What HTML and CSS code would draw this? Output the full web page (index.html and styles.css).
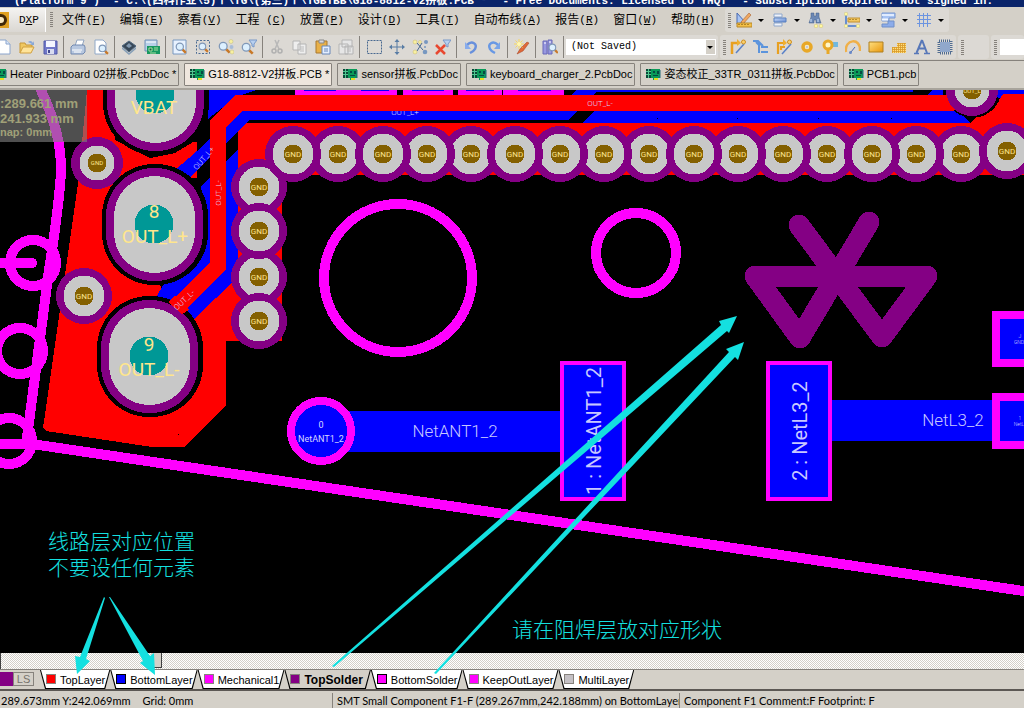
FILE: index.html
```
<!DOCTYPE html>
<html lang="zh-CN">
<head>
<meta charset="utf-8">
<title>DXP - G18-8812-V2拼板.PCB</title>
<link rel="stylesheet" href="styles.css">
</head>
<body>
<svg class="defs" aria-hidden="true">
  <defs>
    <linearGradient id="gb" x1="0" y1="0" x2="1" y2="1"><stop offset="0" stop-color="#c8dcfa"/><stop offset="1" stop-color="#6488d0"/></linearGradient>
    <linearGradient id="gy" x1="0" y1="0" x2="1" y2="1"><stop offset="0" stop-color="#ffe080"/><stop offset="1" stop-color="#e8960c"/></linearGradient>
    <symbol id="i-lens" viewBox="0 0 10 10"><path d="M6 6l3 3" stroke="#c87828" stroke-width="2"/><circle cx="4" cy="4" r="3" fill="#dcf0ff" stroke="#8098b8"/></symbol>
    <symbol id="i-board" viewBox="0 0 16 14"><path d="M1 2h14v9h-3v2H8v-2H1z" fill="#0a9a58"/><path d="M1 2h5v9H1z" fill="#0a4838"/><path d="M1 4.500h5M1 7.500h5M3.500 2v9" stroke="#50c890"/><path d="M8 4h2v2H8zM12 4h2v3h-2zM8 8h5v1H8z" fill="#064a40"/><path d="M9 11h4v2H9z" fill="#e8e020"/><path d="M15 3v8" stroke="#206878"/></symbol>
    <symbol id="i-new" viewBox="0 0 16 16"><path d="M3 1h7l4 4v10H3z" fill="#fff" stroke="#8aa4cc"/><path d="M10 1v4h4" fill="#dbe8fa" stroke="#8aa4cc"/></symbol>
    <symbol id="i-open" viewBox="0 0 16 16"><path d="M1 14V4h5l1 2h6v3" fill="#f0c860" stroke="#c89838"/><path d="M1 14l3-6h11l-3 6z" fill="#ffe49a" stroke="#d0a040"/><path d="M9 3c2-2 4-1 5 1l1-2v4h-4l2-1" fill="#88a8d8"/></symbol>
    <symbol id="i-save" viewBox="0 0 16 16"><path d="M2 2h13v13H2z" fill="#7078c8" stroke="#5058a8"/><path d="M4 2h9v6H4z" fill="#f4f6ff"/><path d="M5 10h7v5H5z" fill="#d8dcf0"/><path d="M6 11h2v3H6z" fill="#404890"/></symbol>
    <symbol id="i-print" viewBox="0 0 16 16"><path d="M5 7l2-6h7l-2 6z" fill="#fff" stroke="#90a4c0"/><path d="M1 8l2-2h11l1 2v5l-2 2H1z" fill="#b8c8e0" stroke="#7088b0"/><path d="M2 11h10M4 13h7" stroke="#fff"/></symbol>
    <symbol id="i-preview" viewBox="0 0 16 16"><path d="M2 1h8l3 3v11H2z" fill="#fff" stroke="#90a8c8"/><use href="#i-lens" x="5" y="5" width="11" height="11"/></symbol>
    <symbol id="i-chip" viewBox="0 0 16 16"><path d="M1 8l7 6 7-6v2l-7 6-7-6z" fill="#88a0b8"/><path d="M1 7l7-5 7 5-7 6z" fill="#384858" stroke="#506880"/><path d="M5 7l3-3 3 3-3 2z" fill="#8098b0"/></symbol>
    <symbol id="i-pcb" viewBox="0 0 16 16"><path d="M1 1h12v11H1z" fill="#b8d0e8" stroke="#7090b8"/><path d="M2 3h10" stroke="#fff"/><path d="M3 7h13v8H3z" fill="#189860"/><path d="M5 9h3v3H5zM10 9h4M10 11h4M6 14h6" stroke="#a8e0a0" fill="#106040"/></symbol>
    <symbol id="i-zdoc" viewBox="0 0 16 16"><path d="M1 1h13v14H1z" fill="#e8f2ff" stroke="#7898c0"/><use href="#i-lens" x="3" y="3" width="12" height="12"/></symbol>
    <symbol id="i-zarea" viewBox="0 0 16 16"><path d="M1.500 1.500h13v13h-13z" fill="none" stroke="#4c6c94" stroke-dasharray="2 1.500"/><use href="#i-lens" x="3" y="3" width="11" height="11"/></symbol>
    <symbol id="i-zsel" viewBox="0 0 16 16"><use href="#i-lens" x="0" y="2" width="13" height="13"/><g fill="#f8f0a0" stroke="#b8b070" stroke-width=".4"><circle cx="13" cy="2.500" r="2"/><circle cx="14" cy="13" r="2"/></g><circle cx="13.500" cy="8" r="2" fill="#a8bcd8"/></symbol>
    <symbol id="i-zfil" viewBox="0 0 16 16"><use href="#i-lens" x="0" y="3" width="13" height="13"/><path d="M8 1h8l-3 4v3l-2-1V5z" fill="#b8d0f0" stroke="#7898c8"/></symbol>
    <symbol id="i-cut" viewBox="0 0 16 16"><path d="M6 1l4 9M10 1L6 10" stroke="#b8b8b8" stroke-width="1.500"/><g fill="none" stroke="#b0b0b0" stroke-width="1.500"><circle cx="5" cy="12" r="2"/><circle cx="11" cy="12" r="2"/></g></symbol>
    <symbol id="i-copy" viewBox="0 0 16 16"><path d="M1 2h7v9H1zM6 5h8v10H6z" fill="#eee" stroke="#b4b4b4"/><path d="M8 8h4M8 10h4M8 12h4" stroke="#bbb"/></symbol>
    <symbol id="i-paste" viewBox="0 0 16 16"><path d="M1 2h11v12H1z" fill="#e8b048" stroke="#a87830"/><path d="M4 1h5v3H4z" fill="#d8d8e0" stroke="#888"/><path d="M7 7h8v8H7z" fill="#e4eeff" stroke="#6888b8"/><path d="M9 10h4M9 12h4" stroke="#6888b8"/></symbol>
    <symbol id="i-pastes" viewBox="0 0 16 16"><path d="M4 1h10v7H4zM1 5h9v10H1zM7 7h8v8H7z" fill="#e6e6e6" stroke="#b4b4b4"/><path d="M9 10h4M9 12h4" stroke="#bbb"/></symbol>
    <symbol id="i-marq" viewBox="0 0 16 16"><path d="M1.500 1.500h14v13h-14z" fill="none" stroke="#486890" stroke-dasharray="2 1"/></symbol>
    <symbol id="i-move" viewBox="0 0 16 16"><path d="M8 2v12M2 8h12" stroke="#587ca4"/><path d="M8 0l2.500 3h-5zM8 16l2.500-3h-5zM0 8l3-2.500v5zM16 8l-3-2.500v5z" fill="#587ca4"/></symbol>
    <symbol id="i-desel" viewBox="0 0 16 16"><path d="M5 4l6 7M5 12l5-8" stroke="#486890"/><g fill="#f8f0a0" stroke="#c8b870" stroke-width=".5"><circle cx="3" cy="3" r="2"/><circle cx="8" cy="3" r="1.500"/><circle cx="3" cy="13" r="2"/></g><g fill="#7898c0"><circle cx="14" cy="3" r="2"/><circle cx="13" cy="13" r="2.300"/><circle cx="13" cy="8" r="1"/></g></symbol>
    <symbol id="i-clear" viewBox="0 0 16 16"><path d="M8 1h8l-3 4v3l-2-1V5z" fill="#b8d0f0" stroke="#7898c8"/><path d="M1 6l9 9M10 6l-9 9" stroke="#e84830" stroke-width="2.500"/></symbol>
    <symbol id="i-undo" viewBox="0 0 16 16"><path d="M4 6c5-5 11-1 8 4-1 2-3 3-5 4" fill="none" stroke="#6890dc" stroke-width="2.500"/><path d="M2 3v7h6z" fill="#88acec"/></symbol>
    <symbol id="i-redo" viewBox="0 0 16 16"><path d="M12 6C7 1 1 5 4 10c1 2 3 3 5 4" fill="none" stroke="#6898e4" stroke-width="2.500"/><path d="M14 3v7H8z" fill="#78a4e8"/></symbol>
    <symbol id="i-wand" viewBox="0 0 16 16"><path d="M3 15l3-5 7-7 2 1-6 8z" fill="#e06838" stroke="#a04020" stroke-width=".5"/><path d="M5 0v10M0 5h10M1.500 1.500l7 7M8.500 1.500l-7 7" stroke="#f8d860"/><circle cx="5" cy="5" r="2" fill="#fff8b0"/></symbol>
    <symbol id="i-brow" viewBox="0 0 16 16"><path d="M1 2h4v13H1zM6 1h4v14H6z" fill="#9898e0" stroke="#6868b8"/><path d="M2 4h2M7 3h2" stroke="#fff"/><use href="#i-lens" x="6" y="4" width="11" height="11"/></symbol>
    <symbol id="i-util" viewBox="0 0 16 16"><path d="M1 1v11l8-2z" fill="#a8c4f4" stroke="#4868b0"/><path d="M5 10l8-9 2 2-8 9z" fill="#f0a860" stroke="#a86030" stroke-width=".6"/><path d="M1 11h15v4H1z" fill="#f4c048" stroke="#b88828"/><path d="M3 12v1M6 12v1M9 12v1M12 12v1" stroke="#704800"/></symbol>
    <symbol id="i-align" viewBox="0 0 16 16"><path d="M2 2h8v3H2zM2 11h8v3H2z" fill="#eef2fa" stroke="#90a8cc"/><path d="M2 6h12v4H2z" fill="url(#gb)" stroke="#5880c0"/></symbol>
    <symbol id="i-find" viewBox="0 0 16 16"><path d="M3 1h3v3h2V1h3v4l2 6H8V8H6v3H1l2-6z" fill="#6c88b4" stroke="#405c88" stroke-width=".5"/><path d="M3 7v3M10 7v3" stroke="#d0e4ff"/><g fill="#fff8a0" stroke="#d0c070" stroke-width=".5"><circle cx="8" cy="14" r="1.800"/><circle cx="13" cy="14" r="1.800"/></g></symbol>
    <symbol id="i-dim" viewBox="0 0 16 16"><path d="M2 3v11h12" fill="none" stroke="#6890d0" stroke-width="2"/><path d="M4 6h12v4H4z" fill="#f4c860" stroke="#c09030"/><path d="M6 7v1M9 7v1M12 7v1" stroke="#785000"/><g fill="#fff8a0" stroke="#c8c080" stroke-width=".5"><circle cx="2" cy="2" r="1.800"/><circle cx="2" cy="14" r="1.800"/><circle cx="14" cy="14" r="1.800"/></g></symbol>
    <symbol id="i-room" viewBox="0 0 16 16"><path d="M2 1h13v5H9v3H2z" fill="#a8c4f4" stroke="#7898d0"/><path d="M2 2h12v2H2z" fill="#e0ecff"/><path d="M2 12h6V9h6v6H2z" fill="#8cacea" stroke="#7090c8"/><path d="M2 7.500h6" stroke="#f4f8ff" stroke-width="2"/></symbol>
    <symbol id="i-grid" viewBox="0 0 16 16"><path d="M3.500 1v14M7.500 1v14M11.500 1v14M1 3.500h14M1 7.500h14M1 11.500h14" stroke="#6c94e0"/></symbol>
    <symbol id="i-rt" viewBox="0 0 16 16"><path d="M2 15V4h6" fill="none" stroke="#e8a020" stroke-width="2.500"/><path d="M7 0l4 4-4 3z" fill="#f0b030"/><path d="M6 14l8-9" stroke="#5880c8" stroke-width="1.500"/><circle cx="13.500" cy="3" r="2" fill="#f8d070" stroke="#d09020"/></symbol>
    <symbol id="i-rt2" viewBox="0 0 16 16"><path d="M2 15V4h6M5 11V8h4" fill="none" stroke="#e8a020" stroke-width="2.200"/><path d="M7 0l4 4-4 3z" fill="#f0b030"/><path d="M6 15l9-10" stroke="#5880c8" stroke-width="1.500"/><circle cx="13.500" cy="3" r="2" fill="#f8d070" stroke="#d09020"/></symbol>
    <symbol id="i-multi" viewBox="0 0 16 16"><path d="M0 2h5l5 5M6 3v11M8 8h7M8 13h7M3 3l4 4" fill="none" stroke="#5c94dc" stroke-width="2"/></symbol>
    <symbol id="i-pad" viewBox="0 0 16 16"><circle cx="8" cy="8" r="4" fill="#fff6c8" stroke="#e8a828" stroke-width="3.500"/><circle cx="8" cy="8" r="1.500" fill="#c8c8d8"/></symbol>
    <symbol id="i-via" viewBox="0 0 16 16"><path d="M9 3h7v5H9z" fill="#70b8e0"/><path d="M6 9v6" stroke="#e8a828" stroke-width="3"/><circle cx="6" cy="6" r="4" fill="#fff6c8" stroke="#e8a828" stroke-width="3"/></symbol>
    <symbol id="i-arc" viewBox="0 0 16 16"><path d="M1 13C-1 0 16-2 15 12" fill="none" stroke="#f0b048" stroke-width="2.500"/><path d="M6 13l4-5" stroke="#486cb8"/><circle cx="5.500" cy="13.500" r="1.500" fill="#6888c8"/></symbol>
    <symbol id="i-fill" viewBox="0 0 16 16"><path d="M1 3h14v10H1z" fill="url(#gy)" stroke="#b08020"/></symbol>
    <symbol id="i-poly" viewBox="0 0 16 16"><path d="M1 14V8h5V4h9v10z" fill="#ffe080"/><path d="M1.500 8v6M3.500 8v6M5.500 8v6M7.500 4v10M9.500 4v10M11.500 4v10M13.500 4v10M6 4.500h9M6 6.500h9M1 8.500h14M1 10.500h14M1 12.500h14" stroke="#d89828" stroke-width=".8"/></symbol>
    <symbol id="i-text" viewBox="0 0 16 16"><path d="M8 1L2.500 14M8 1l5 13M4.500 9.500h7" fill="none" stroke="#5878b8" stroke-width="2"/><path d="M0 14.500h5M10 14.500h6" stroke="#5878b8" stroke-width="1.500"/></symbol>
    <symbol id="i-comp" viewBox="0 0 16 16"><path d="M2 2h12v12H2z" fill="none" stroke="#506c90" stroke-width="3" stroke-dasharray="1 1"/><path d="M3 3h10v10H3z" fill="#90a8cc"/></symbol>
    <symbol id="big" viewBox="0 0 106 121" overflow="visible">
      <rect width="106" height="121" rx="52" fill="#000"/>
      <rect x="4" y="4" width="97" height="113" rx="48" fill="#840084"/>
      <rect x="12" y="12" width="81" height="97" rx="40" fill="#c8c8c8"/>
      <circle cx="52" cy="60" r="19.500" fill="#009896"/>
    </symbol>
    <g id="via"><circle r="28" fill="#840084"/><circle r="20.500" fill="#c8c8c8"/><circle r="9.500" fill="#846000"/><text class="gnd" y="3">GND</text></g>
    <g id="via-s"><circle r="26" fill="#840084"/><circle r="17.500" fill="#c8c8c8"/><circle r="9.500" fill="#846000"/></g>
  </defs>
</svg>

<div class="app">
  <header class="title"><span>(Platform 9 )&nbsp; - C:\(四科作业\5)个\TG\(第三)个\TGBTBB\G18-8812-V2拼板.PCB *</span><span>- Free Documents. Licensed to YHQT</span><span>- Subscription expired. Not signed in.</span></header>

  <div class="row menurow">
    <button class="dxp"><svg class="ic" viewBox="0 0 16 16"><path d="M0 0h16v16H0z" fill="#e0a020"/><circle cx="8" cy="8" r="6" fill="#402808"/><circle cx="8" cy="8" r="3" fill="#f8e8c0"/></svg><span>D<u>X</u>P</span></button>
    <i class="grip"></i>
    <nav class="menus">
      <button>文件<span>(<u>F</u>)</span></button><button>编辑<span>(<u>E</u>)</span></button><button>察看<span>(<u>V</u>)</span></button><button>工程<span> (<u>C</u>)</span></button><button>放置<span>(<u>P</u>)</span></button><button>设计<span>(<u>D</u>)</span></button><button>工具<span>(<u>T</u>)</span></button><button>自动布线<span>(<u>A</u>)</span></button><button>报告<span>(<u>R</u>)</span></button><button>窗口<span>(<u>W</u>)</span></button><button>帮助<span>(<u>H</u>)</span></button>
    </nav>
    <div class="bar drops">
      <i class="grip"></i>
      <button aria-label="Utilities"><svg class="ic"><use href="#i-util"/></svg></button>
      <button aria-label="Align"><svg class="ic"><use href="#i-align"/></svg></button>
      <button aria-label="Find"><svg class="ic"><use href="#i-find"/></svg></button>
      <button aria-label="Dimension"><svg class="ic"><use href="#i-dim"/></svg></button>
      <button aria-label="Room"><svg class="ic"><use href="#i-room"/></svg></button>
      <button aria-label="Grid"><svg class="ic"><use href="#i-grid"/></svg></button>
    </div>
  </div>

  <div class="row toolrow">
    <div class="bar main">
      <button aria-label="New"><svg class="ic"><use href="#i-new"/></svg></button><button aria-label="Open"><svg class="ic"><use href="#i-open"/></svg></button><button aria-label="Save"><svg class="ic"><use href="#i-save"/></svg></button><i class="sep"></i>
      <button aria-label="Print"><svg class="ic"><use href="#i-print"/></svg></button><button aria-label="Preview"><svg class="ic"><use href="#i-preview"/></svg></button><i class="sep"></i>
      <button aria-label="Device view"><svg class="ic"><use href="#i-chip"/></svg></button><button aria-label="Board"><svg class="ic"><use href="#i-pcb"/></svg></button><i class="sep"></i>
      <button aria-label="Fit document"><svg class="ic"><use href="#i-zdoc"/></svg></button><button aria-label="Zoom area"><svg class="ic"><use href="#i-zarea"/></svg></button><button aria-label="Zoom selected"><svg class="ic"><use href="#i-zsel"/></svg></button><button aria-label="Zoom filtered"><svg class="ic"><use href="#i-zfil"/></svg></button><i class="sep"></i>
      <button aria-label="Cut"><svg class="ic"><use href="#i-cut"/></svg></button><button aria-label="Copy"><svg class="ic"><use href="#i-copy"/></svg></button><button aria-label="Paste"><svg class="ic"><use href="#i-paste"/></svg></button><button aria-label="Paste array"><svg class="ic"><use href="#i-pastes"/></svg></button><i class="sep"></i>
      <button aria-label="Select area"><svg class="ic"><use href="#i-marq"/></svg></button><button aria-label="Move"><svg class="ic"><use href="#i-move"/></svg></button><button aria-label="Deselect"><svg class="ic"><use href="#i-desel"/></svg></button><button aria-label="Clear filter"><svg class="ic"><use href="#i-clear"/></svg></button><i class="sep"></i>
      <button aria-label="Undo"><svg class="ic"><use href="#i-undo"/></svg></button><button aria-label="Redo"><svg class="ic"><use href="#i-redo"/></svg></button><i class="sep"></i>
      <button aria-label="Cross probe"><svg class="ic"><use href="#i-wand"/></svg></button><i class="sep"></i>
      <button aria-label="Browse"><svg class="ic"><use href="#i-brow"/></svg></button><i class="sep"></i>
      <span class="combo"><select aria-label="View"><option>(Not Saved)</option></select></span>
    </div>
    <div class="bar place">
      <i class="grip"></i>
      <button aria-label="Route"><svg class="ic"><use href="#i-rt"/></svg></button><button aria-label="Multi route"><svg class="ic"><use href="#i-multi"/></svg></button><button aria-label="Pair route"><svg class="ic"><use href="#i-rt2"/></svg></button><button aria-label="Pad"><svg class="ic"><use href="#i-pad"/></svg></button><button aria-label="Via"><svg class="ic"><use href="#i-via"/></svg></button><button aria-label="Arc"><svg class="ic"><use href="#i-arc"/></svg></button><button aria-label="Fill"><svg class="ic"><use href="#i-fill"/></svg></button><button aria-label="Polygon"><svg class="ic"><use href="#i-poly"/></svg></button><button aria-label="String"><svg class="ic"><use href="#i-text"/></svg></button><button aria-label="Component"><svg class="ic"><use href="#i-comp"/></svg></button>
    </div>
    <div class="bar blank"><i class="grip"></i></div>
    <div class="bar last"><i class="grip"></i><input type="text" aria-label="Address"></div>
  </div>

  <nav class="docs">
    <button><svg class="ic"><use href="#i-board"/></svg>Heater Pinboard 02拼板.PcbDoc *</button>
    <button class="on"><svg class="ic"><use href="#i-board"/></svg>G18-8812-V2拼板.PCB *</button>
    <button><svg class="ic"><use href="#i-board"/></svg>sensor拼板.PcbDoc</button>
    <button><svg class="ic"><use href="#i-board"/></svg>keyboard_charger_2.PcbDoc</button>
    <button><svg class="ic"><use href="#i-board"/></svg>姿态校正_33TR_0311拼板.PcbDoc</button>
    <button><svg class="ic"><use href="#i-board"/></svg>PCB1.pcb</button>
  </nav>

  <main class="work">
    <div class="board">
      <svg class="pcb" viewBox="0 90 1024 563" preserveAspectRatio="xMinYMin slice" shape-rendering="crispEdges">
        <path fill="#f00" d="M87 90H110L115 140 150 158 175 153 193 142H197V178H193L160 170V285L162 290 160 294 150 300 194 319 238 277V123H970L1003 94H1024V175H282V341H226V405L184 447H152L46 431 43 428 78 184z"/>
        <path fill="#00f" d="M208 90H256L236 97 208 119zM226 127L242 111H577L568 120H250L226 143zM197 151L210 138V157L189 179 174 171zM226 161L238 149V277L194 319 182 312 226 270zM201 186L210 177V264L170 304 157 296 163 285 190 260 205 220zM594 111H960L970 123H583zM572 95L576 90H913V92H596L593 95zM927 95L932 90H943V95zM995 90H1024V94H1003L996 105z"/>
        <path d="M568 123l9-12h17l-11 12z"/>
        <text class="net s7" x="405" y="115">OUT_L+</text>
        <path fill="none" stroke="#f00" stroke-width="16" d="M960 103H239L218 124V266L175 309"/>
        <path fill="#f0f" d="M295 90h102v5H295zM403 90h50v5h-50zM458 90h44v5h-44zM503 90h61v5h-61z"/>
        <path fill="#00f" d="M304 90h32v1h-32zM361 90h28v1h-28zM412 90h32v1h-32zM466 90h28v1h-28zM518 90h33v1h-33z"/>
        <path d="M657 118h1v1h-1zM737 118h1v1h-1zM818 118h1v1h-1zM891 118h1v1h-1zM178 434h1v1h-1z"/>
        <use href="#big" x="103" y="34" width="106" height="121"/>
        <use href="#big" x="102" y="164" width="106" height="121"/>
        <use href="#big" x="97" y="296" width="106" height="121"/>
        <path fill="#f00" d="M168 302l7-6 14 14-7 4z"/>
        <g transform="translate(97 163)"><use href="#via-s"/><text class="gnd sm" y="2">GND</text></g>
        <use href="#via" x="84" y="296"/>
        <use href="#via" x="259" y="187"/><use href="#via" x="259" y="277"/><use href="#via" x="259" y="231"/><use href="#via" x="259" y="321"/>
        <use href="#via" x="961" y="154"/><use href="#via" x="916" y="154"/><use href="#via" x="827" y="154"/><use href="#via" x="783" y="154"/><use href="#via" x="738" y="154"/><use href="#via" x="649" y="154"/><use href="#via" x="604" y="154"/><use href="#via" x="560" y="154"/><use href="#via" x="471" y="154"/><use href="#via" x="427" y="154"/><use href="#via" x="338" y="154"/>
        <use href="#via" x="293" y="154"/><use href="#via" x="383" y="154"/><use href="#via" x="515" y="154"/><use href="#via" x="694" y="154"/><use href="#via" x="872" y="154"/><use href="#via" x="1007" y="151"/>
        <path d="M954 111A29 29 0 0 0 1000 98L972 92z"/>
        <g transform="translate(972 90)"><use href="#via-s"/><text class="gnd sm" y="3">OUT_L</text></g>

        <g fill="none" stroke="#f0f" stroke-width="10">
          <path d="M40 88C56 122 61 145 61 170C60 200 52 250 49 270L26 445"/>
          <circle cx="33" cy="263" r="23"/><path d="M0 263H32" stroke-linecap="round"/>
          <circle cx="20" cy="351" r="23"/><circle cx="9" cy="441" r="23"/><path d="M0 444H32L1030 592"/>
          <circle cx="398" cy="278" r="74"/><circle cx="636" cy="253" r="40"/>
        </g>
        <path fill="none" stroke="#840084" stroke-width="21" stroke-linecap="round" stroke-linejoin="round" d="M799 225L882 337 927 276H755L800 338 869 222"/>
        <g fill="#00f">
          <path d="M321 411h239v41H321zM832 400h162v41H832z"/>
          <g stroke="#f0f" stroke-width="8"><circle cx="321" cy="431" r="30"/><path d="M996 315h40v48h-40zM996 397h40v48h-40z"/></g>
          <g stroke="#f0f" stroke-width="4"><path d="M562 363h62v136h-62zM768 363h62v136h-62z"/></g>
        </g>
        <g class="pad-name"><text x="154" y="114">VBAT</text><text x="154" y="218">8</text><text x="155" y="243">OUT_L+</text><text x="149" y="351">9</text><text x="149" y="376">OUT_L-</text></g>
        <g class="net">
          <text class="s7" x="600" y="106">OUT_L-</text>
          <text class="s7" transform="translate(221 193) rotate(-90)">OUT_L-</text>
          <text class="s7" transform="translate(206 160) rotate(-50)">OUT_L+</text>
          <text class="s7" transform="translate(186 302) rotate(-43)">OUT_L-</text>
          <text class="s8" x="321" y="428">0</text><text class="s8" x="321" y="442">NetANT1_2</text>
          <text class="s17" x="455" y="437">NetANT1_2</text><text class="s17" x="953" y="426">NetL3_2</text>
          <text class="s20" transform="translate(601 431) rotate(-90)">1 : NetANT1_2</text>
          <text class="s20" transform="translate(807 431) rotate(-90)">2 : NetL3_2</text>
          <text class="s5" x="1020" y="338">J</text><text class="s5" x="1019" y="344">GND</text><text class="s5" x="1020" y="420">1</text><text class="s5" x="1019" y="426">NetL</text>
        </g>
      </svg>
      <div class="hud"><p>:289.661 mm</p><p>241.933 mm</p><p class="snap">nap: 0mm</p></div>
    </div>
    <div class="scroll"><i></i></div>
    <nav class="layers">
      <i class="cur"></i><button class="ls">LS</button>
      <button class="tab"><i class="red"></i>TopLayer</button><button class="tab"><i class="blue"></i>BottomLayer</button><button class="tab"><i class="mag"></i>Mechanical1</button><button class="tab on"><i class="pur"></i>TopSolder</button><button class="tab"><i class="mag dark"></i>BottomSolder</button><button class="tab"><i class="mag"></i>KeepOutLayer</button><button class="tab"><i class="gray"></i>MultiLayer</button>
    </nav>
    <svg class="notes" viewBox="0 90 1024 601" preserveAspectRatio="xMinYMin slice">
      <path d="M332 666L721 325 719 321 737 316 729 333 727 331 334 667zM434 673L729 352 726 349 744 342 738 360 735 357 436 674zM104 597L80 657 75 656 77 674 90 661 86 659 105 598zM109 597L143 661 140 663 155 675 154 653 150 656 110 597z"/>
      <text x="48" y="549">线路层对应位置</text><text x="48" y="575">不要设任何元素</text><text x="512" y="637">请在阻焊层放对应形状</text>
    </svg>
  </main>

  <footer class="status">
    <div><span>289.673mm Y:242.069mm</span><span>Grid: 0mm</span></div>
    <div>SMT Small Component F1-F (289.267mm,242.188mm) on BottomLayer</div>
    <div>Component F1 Comment:F Footprint: F</div>
  </footer>
</div>
</body>
</html>
```

FILE: styles.css
```
* { box-sizing: border-box; }
body {
  margin: 0;
  background: #d4d0c8;
  color: #000;
  font: 11px/14px "Liberation Sans", "Noto Sans CJK SC", sans-serif;
}
button {
  font: inherit;
  color: inherit;
  background: none;
  border: 0;
  margin: 0;
  padding: 0;
  display: flex;
  align-items: center;
  white-space: nowrap;
}
.defs { position: absolute; width: 0; height: 0; }
.app { display: flex; flex-direction: column; height: 100vh; overflow: hidden; }
.ic { width: 16px; height: 16px; flex: none; }

.title {
  display: flex;
  align-items: flex-end;
  justify-content: space-between;
  height: 7px;
  flex: none;
  padding: 0 31px 0 14px;
  overflow: hidden;
  background: #0a246a;
  color: #fff;
  font: bold 11px/12px "Liberation Mono", "Noto Sans CJK SC", monospace;
  white-space: pre;
}

.row { display: flex; align-items: flex-start; flex: none; overflow: hidden; }
.menurow { height: 28px; padding-top: 1px; }
.dxp {
  height: 24px;
  width: 46px;
  flex: none;
  gap: 10px;
  overflow: hidden;
  border-right: 1px solid #fff;
  background: linear-gradient(#f4f3f1, #dad7d2);
  font: 11px "Liberation Mono", monospace;
}
.dxp .ic { margin-left: -7px; }
.grip {
  width: 3px;
  height: 15px;
  flex: none;
  background: repeating-linear-gradient(#86827c 0 1px, transparent 1px 2px);
}
.menurow > .grip { margin: 4px 0 0 4px; }
.menus { display: flex; margin-left: 2px; flex: none; }
.menus button { height: 24px; padding: 0 7px; font-size: 12px; line-height: 20px; }
.menus span { font: 11px/20px "Liberation Mono", monospace; white-space: pre; }

.bar {
  display: flex;
  align-items: center;
  flex: none;
  height: 24px;
  background: #dcd9d4;
  border-radius: 3px;
}
.bar button { width: 23px; height: 24px; padding-left: 4px; flex: none; }
.bar > .grip { margin-left: 3px; }
.drops { margin-left: 3px; padding-right: 2px; }
.drops button { width: 36px; gap: 6px; padding-left: 5px; }
.drops button::after {
  content: "";
  border: solid transparent;
  border-width: 3px 3px 0;
  border-top-color: #000;
}
.toolrow { height: 25px; gap: 2px; }
.main { margin-left: -8px; padding-right: 2px; }
.sep { width: 5px; height: 22px; flex: none; background: linear-gradient(90deg, transparent 2px, #86827c 2px 3px, transparent 3px); }
.combo { position: relative; display: flex; }
.combo select {
  appearance: none;
  width: 150px;
  height: 16px;
  margin: 0;
  padding: 0 4px;
  border: 1px solid #fff;
  border-radius: 0;
  background: #fff;
  color: #000;
  font: 10px/14px "Liberation Mono", monospace;
}
.combo::before {
  content: "";
  position: absolute;
  right: 1px;
  top: 1px;
  width: 9px;
  height: 14px;
  background: #d4d0c8;
}
.combo::after {
  content: "";
  position: absolute;
  right: 3px;
  top: 7px;
  border: solid transparent;
  border-width: 3px 3px 0;
  border-top-color: #000;
}
.blank { width: 31px; }
.last { flex: 1; gap: 3px; min-width: 0; }
.last input { flex: 1; min-width: 0; height: 16px; border: 0; padding: 0 3px; }

.docs {
  display: flex;
  align-items: center;
  gap: 5px;
  flex: none;
  height: 30px;
  padding-bottom: 1px;
  border-top: 1px solid #86827c;
  border-bottom: 2px solid #a8a49c;
  overflow: hidden;
}
.docs button {
  height: 23px;
  gap: 3px;
  padding: 0 2px 0 4px;
  flex: none;
  border: 1px solid #86827c;
  border-radius: 1px;
}
.docs button:first-child { margin-left: -14px; }
.docs .on { background: #efe7de; }
.docs .ic { height: 14px; }

.work { position: relative; flex: 1; min-height: 0; display: flex; flex-direction: column; }
.board { position: relative; flex: 1; min-height: 0; background: #000; overflow: hidden; }
.pcb, .notes { display: block; width: 100%; height: 100%; font-family: Roboto, sans-serif; }
.pcb text, .gnd { text-anchor: middle; }
.gnd { fill: #ffe690; font-family: Roboto, sans-serif; font-size: 8px; }
.gnd.sm { font-size: 6px; }
.pad-name { fill: #ffe68c; font-size: 19px; }
.net { fill: #d8d8ff; font-weight: 300; }
.s5 { font-size: 5px; }
.s7 { font-size: 8px; }
.s8 { font-size: 9px; font-weight: 400; }
.s17 { font-size: 17px; fill: #c8c8ff; }
.s20 { font-size: 20px; font-weight: 400; fill: #c8c8ff; }
.hud {
  position: absolute;
  left: 0;
  top: 0;
  width: 87px;
  height: 52px;
  padding-top: 6px;
  background: rgba(128, 128, 128, .62);
  color: #a0a078;
  font-size: 13px;
  font-weight: bold;
  line-height: 15px;
}
.hud p { margin: 0; }
.hud .snap { font-size: 11px; line-height: 13px; }
.notes { position: absolute; left: 0; top: 0; pointer-events: none; fill: #14e0e0; }
.notes text { font: 300 21px "Noto Sans CJK SC", sans-serif; }

.scroll {
  height: 16px;
  flex: none;
  border-left: 1px solid #404040;
  background: repeating-conic-gradient(#fff 0 25%, #d4d0c8 0 50%) 0 0 / 2px 2px;
}
.scroll i {
  display: block;
  width: 11px;
  height: 15px;
  margin-left: 150px;
  background: #d4d0c8;
  border-right: 1px solid #404040;
  border-bottom: 1px solid #404040;
}

.layers {
  display: flex;
  flex: none;
  height: 22px;
  border-top: 1px solid #86827c;
  border-bottom: 2px solid #5c5854;
  overflow: hidden;
}
.cur { width: 13px; height: 14px; margin-top: 2px; background: #840084; flex: none; }
.ls { width: 21px; height: 14px; margin: 2px 6px 0 0; justify-content: center; border: 1px solid #86827c; color: #76726c; }
.tab {
  position: relative;
  z-index: 0;
  height: 19px;
  padding: 0 5px 0 6px;
  gap: 4px;
  flex: none;
  background: #000;
  clip-path: polygon(0 0, 100% 0, calc(100% - 5px) 100%, 5px 100%);
}
.tab::before {
  content: "";
  position: absolute;
  z-index: -1;
  inset: 0;
  background: #fff;
  clip-path: polygon(1px 0, calc(100% - 1px) 0, calc(100% - 6px) calc(100% - 1px), 6px calc(100% - 1px));
}
.tab.on { padding-right: 8px; font-size: 12px; font-weight: bold; }
.tab.on::before { background: #d4d0c8; }
.tab i { width: 10px; height: 10px; margin-bottom: 2px; border: 1px solid #86827c; }
.tab .red { background: #f00; }
.tab .blue { background: #00f; border-color: #000; }
.tab .mag { background: #f0f; }
.tab .dark { border-color: #000; }
.tab .pur { background: #840084; }
.tab .gray { background: #c4c0c4; }

.status {
  display: grid;
  grid-template-columns: 332fr 347fr 345fr;
  flex: none;
  height: 17px;
  padding-top: 2px;
  font-family: Lato, sans-serif;
  white-space: nowrap;
}
.status div { display: flex; gap: 12px; padding-left: 4px; line-height: 15px; border-left: 1px solid #86827c; overflow: hidden; }
.status div:first-child { padding-left: 1px; border: 0; }
```
